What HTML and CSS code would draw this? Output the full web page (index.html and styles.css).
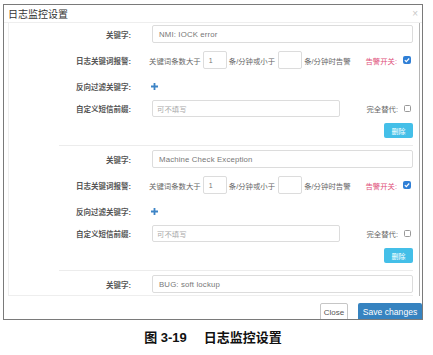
FILE: index.html
```html
<!doctype html>
<html lang="zh-CN">
  <head>
    <meta charset="UTF-8" />
    <title>日志监控设置</title>
    <link rel="stylesheet" href="styles.css">
  </head>

  <body>
    <div class="modal">
      <div class="modal-header">
        <span class="modal-title">日志监控设置</span>
        <span class="modal-close">×</span>
      </div>

      <div class="modal-body">
        <div class="panel">
          <div class="group">
            <div class="row">
              <span class="label">关键字:</span>
              <div class="field">
                <span class="input input--keyword">NMI: IOCK error</span>
              </div>
            </div>
            <div class="row row--alarm">
              <span class="label">日志关键词报警:</span>
              <div class="field">
                <span>关键词条数大于</span>
                <span class="input input--small">1</span>
                <span class="after-input">条/分钟或小于</span>
                <span class="input input--small input--gap"></span>
                <span class="after-input">条/分钟时告警</span>
                <span class="switch-label">告警开关:</span>
                <span class="checkbox checkbox--checked">
                  <svg width="8" height="8" viewBox="0 0 8 8"><path d="M1.8 4.1 3.3 5.6 6.2 2.5" fill="none" stroke="#fff" stroke-width="1.2"/></svg>
                </span>
              </div>
            </div>
            <div class="row row--reverse">
              <span class="label">反向过滤关键字:</span>
              <div class="field">
                <svg class="plus" width="7" height="7" viewBox="0 0 7 7"><path d="M3.5 0v7M0 3.5h7" stroke="#3d84c6" stroke-width="1.8"/></svg>
              </div>
            </div>
            <div class="row row--prefix">
              <span class="label">自定义短信前缀:</span>
              <div class="field">
                <span class="input input--prefix placeholder">可不填写</span>
                <span class="switch-label switch-label--plain">完全替代:</span>
                <span class="checkbox"></span>
              </div>
            </div>
            <div class="actions">
              <span class="btn-delete">删除</span>
            </div>
            <hr class="divider">
          </div>

          <div class="group">
            <div class="row">
              <span class="label">关键字:</span>
              <div class="field">
                <span class="input input--keyword">Machine Check Exception</span>
              </div>
            </div>
            <div class="row row--alarm">
              <span class="label">日志关键词报警:</span>
              <div class="field">
                <span>关键词条数大于</span>
                <span class="input input--small">1</span>
                <span class="after-input">条/分钟或小于</span>
                <span class="input input--small input--gap"></span>
                <span class="after-input">条/分钟时告警</span>
                <span class="switch-label">告警开关:</span>
                <span class="checkbox checkbox--checked">
                  <svg width="8" height="8" viewBox="0 0 8 8"><path d="M1.8 4.1 3.3 5.6 6.2 2.5" fill="none" stroke="#fff" stroke-width="1.2"/></svg>
                </span>
              </div>
            </div>
            <div class="row row--reverse">
              <span class="label">反向过滤关键字:</span>
              <div class="field">
                <svg class="plus" width="7" height="7" viewBox="0 0 7 7"><path d="M3.5 0v7M0 3.5h7" stroke="#3d84c6" stroke-width="1.8"/></svg>
              </div>
            </div>
            <div class="row row--prefix">
              <span class="label">自定义短信前缀:</span>
              <div class="field">
                <span class="input input--prefix placeholder">可不填写</span>
                <span class="switch-label switch-label--plain">完全替代:</span>
                <span class="checkbox"></span>
              </div>
            </div>
            <div class="actions">
              <span class="btn-delete">删除</span>
            </div>
            <hr class="divider">
          </div>

          <div class="group">
            <div class="row">
              <span class="label">关键字:</span>
              <div class="field">
                <span class="input input--keyword">BUG: soft lockup</span>
              </div>
            </div>
          </div>
        </div>
        <div class="scrollbar"></div>
      </div>

      <div class="modal-footer">
        <span class="btn btn-close">Close</span>
        <span class="btn btn-save">Save changes</span>
      </div>
    </div>

    <p class="caption"><span>图 3-19</span><span class="caption-title">日志监控设置</span></p>
  </body>
</html>
```

FILE: styles.css
```css
* {
  box-sizing: border-box;
}

body {
  margin: 0;
  background-color: #fff;
  color: #666;
  font-family: "Liberation Sans", "Noto Sans CJK SC", sans-serif;
  font-size: 7.4px;
}

.modal {
  width: 420px;
  height: 316px;
  margin: 4px 0 0 3px;
  display: flex;
  flex-direction: column;
  border: 1px solid #7a7a7a;
  overflow: hidden;
}

.modal-header {
  height: 18px;
  flex: none;
  display: flex;
  justify-content: space-between;
  align-items: center;
  padding: 0 4px 0 4px;
  border-bottom: 1px solid #eee;
}

.modal-title {
  color: #333;
  font-size: 10px;
}

.modal-close {
  color: #c8c8c8;
  font-size: 10px;
}

.modal-body {
  height: 273px;
  flex: none;
  display: flex;
  padding-left: 4px;
}

.panel {
  width: 405px;
  flex: none;
  border-left: 1px solid #eee;
  border-bottom: 1px solid #eee;
  overflow: hidden;
}

.scrollbar {
  width: 7px;
  border-right: 1px solid #b4b4b4;
}

.group {
  padding-top: 4px;
}

.group:first-child {
  padding-top: 2px;
}

.row {
  display: flex;
  align-items: center;
  height: 18px;
}

.row--alarm,
.row--reverse {
  margin-top: 8px;
}

.row--prefix {
  margin-top: 4px;
}

.label {
  width: 122px;
  flex: none;
  text-align: right;
  color: #555;
  font-weight: bold;
  font-size: 7.5px;
}

.field {
  flex: 1;
  display: flex;
  align-items: center;
  height: 100%;
  margin-left: 18px;
}

.input {
  display: flex;
  align-items: center;
  height: 18px;
  border: 1px solid #dcdcdc;
  border-radius: 2px;
  background-color: #fff;
  color: #777;
  font-size: 7.8px;
}

.input--keyword {
  flex: 1;
  margin-left: 3px;
  padding-left: 6px;
  letter-spacing: 0.15px;
}

.input--small {
  width: 24px;
  margin-left: 2px;
  padding-left: 5px;
  font-size: 7px;
}

.input--gap {
  margin-left: 3px;
}

.after-input {
  margin-left: 2px;
}

.input--prefix {
  width: 188px;
  height: 17px;
  margin-left: 3px;
  padding-left: 4px;
}

.placeholder {
  color: #aaa;
  font-size: 7.4px;
}

.switch-label {
  margin-left: auto;
  color: #e0507a;
}

.switch-label--plain {
  color: #666;
}

.checkbox {
  width: 7px;
  height: 7px;
  margin: 0 2px 0 6px;
  display: flex;
  border: 1px solid #999;
  border-radius: 1.5px;
}

.checkbox--checked {
  width: 8px;
  height: 8px;
  border: 0;
  background-color: #2f7fd6;
  border-radius: 2px;
}

.plus {
  margin-left: 2px;
}

.actions {
  display: flex;
  justify-content: flex-end;
  margin-top: 6px;
}

.btn-delete {
  width: 29px;
  height: 15px;
  display: flex;
  justify-content: center;
  align-items: center;
  background-color: #44bfe8;
  border-radius: 2px;
  color: #fff;
  font-size: 7px;
}

.divider {
  margin: 7px 0 0 50px;
  border: 0;
  border-top: 1px solid #ececec;
}

.modal-footer {
  flex: none;
  display: flex;
  justify-content: flex-end;
  gap: 10px;
  padding-top: 7px;
}

.btn {
  height: 18px;
  display: flex;
  justify-content: center;
  align-items: center;
  border-radius: 2px;
  font-size: 8px;
}

.btn-close {
  width: 28px;
  border: 1px solid #c6c6c6;
  color: #555;
}

.btn-save {
  width: 64px;
  background-color: #3683c0;
  color: #fff;
  font-size: 8.6px;
}

.caption {
  width: 426px;
  margin: 10px 0 0;
  color: #111;
  font-size: 13px;
  font-weight: bold;
  line-height: 16px;
  text-align: center;
}

.caption-title {
  margin-left: 17px;
}
```
